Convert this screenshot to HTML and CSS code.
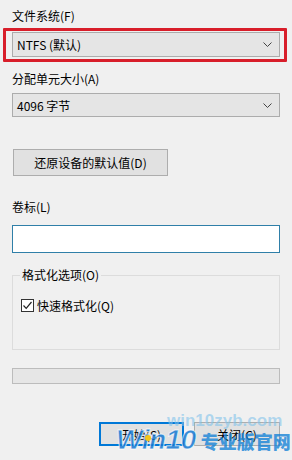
FILE: index.html
```html
<!DOCTYPE html>
<html lang="zh-CN">
<head>
<meta charset="utf-8">
<title>格式化</title>
<link rel="stylesheet" href="styles.css">
</head>
<body>
<div class="dlg">
  <div class="label l1">文件系统(F)</div>
  <div class="combo c1 hl">
    <span>NTFS (默认)</span>
    <svg class="chev" width="9" height="5" viewBox="0 0 9 5"><path d="M0.5 0.5 L4.5 4.5 L8.5 0.5" fill="none" stroke="#444" stroke-width="1"/></svg>
  </div>
  <div class="label l2">分配单元大小(A)</div>
  <div class="combo c2">
    <span>4096 字节</span>
    <svg class="chev" width="9" height="5" viewBox="0 0 9 5"><path d="M0.5 0.5 L4.5 4.5 L8.5 0.5" fill="none" stroke="#444" stroke-width="1"/></svg>
  </div>
  <div class="btn restore">还原设备的默认值(D)</div>
  <div class="label l3">卷标(L)</div>
  <div class="input"></div>
  <div class="group">
    <div class="legend">格式化选项(O)</div>
    <div class="check">
      <span class="box"><svg width="11" height="11" viewBox="0 0 11 11"><path d="M1.5 5.5 L4.2 8.3 L9.5 2" fill="none" stroke="#222" stroke-width="1.2"/></svg></span>
      <span>快速格式化(Q)</span>
    </div>
  </div>
  <div class="progress"></div>
  <div class="actions">
    <div class="btn def">开始(S)</div>
    <div class="btn">关闭(C)</div>
  </div>
</div>
<div class="wm">
  <div class="wm-url">win10zyb.com</div>
  <div class="wm-main"><span class="wm-win">Win10</span><span class="wm-cn">专业版官网</span></div>
  <span class="wm-dot"></span>
</div>
</body>
</html>
```

FILE: styles.css
```css
html, body {
  margin: 0;
  padding: 0;
  background: #f0f0f0;
}
body {
  width: 292px;
  height: 460px;
  overflow: hidden;
  position: relative;
  font-family: "Noto Sans CJK SC", "Microsoft YaHei", sans-serif;
  font-size: 12px;
  color: #000;
}
.dlg {
  padding: 0 12px;
  display: flex;
  flex-direction: column;
}
.label {
  height: 16px;
  line-height: 16px;
}
.l1 { margin-top: 8px; }
.combo {
  box-sizing: border-box;
  height: 25px;
  background: #e5e5e5;
  border: 1px solid #acacac;
  display: flex;
  align-items: center;
  justify-content: space-between;
  padding: 0 7px 0 4px;
  width: 268px;
}
.c1 { margin-top: 8px; position: relative; }
.hl::after {
  content: "";
  position: absolute;
  left: -10px;
  right: -8px;
  top: -5px;
  bottom: -6px;
  border: 3px solid #d81e2a;
  border-radius: 1px;
}
.l2 { margin-top: 14px; }
.c2 { margin-top: 6px; height: 24px; }
.btn {
  box-sizing: border-box;
  height: 25px;
  background: #e1e1e1;
  border: 1px solid #adadad;
  display: flex;
  align-items: center;
  justify-content: center;
}
.restore {
  margin-top: 32px;
  margin-left: 1px;
  width: 155px;
  height: 27px;
}
.l3 { margin-top: 23px; }
.input {
  box-sizing: border-box;
  margin-top: 10px;
  height: 28px;
  width: 268px;
  background: #fff;
  border: 1px solid #2f7fa8;
}
.group {
  margin-top: 22px;
  box-sizing: border-box;
  width: 268px;
  height: 75px;
  border: 1px solid #dcdcdc;
  position: relative;
  padding: 0 8px;
}
.legend {
  position: absolute;
  left: 7px;
  top: -9px;
  padding: 0 2px;
  background: #f0f0f0;
  line-height: 16px;
  color: #000;
}
.check {
  margin-top: 21px;
  display: flex;
  align-items: center;
  gap: 3px;
  height: 16px;
}
.box {
  box-sizing: border-box;
  width: 13px;
  height: 13px;
  border: 1px solid #333;
  background: #fff;
  display: flex;
  align-items: center;
  justify-content: center;
}
.box svg { display: block; }
.progress {
  box-sizing: border-box;
  margin-top: 18px;
  width: 268px;
  height: 16px;
  background: #e6e6e6;
  border: 1px solid #bcbcbc;
}
.actions {
  margin-top: 38px;
  display: flex;
  justify-content: flex-end;
  gap: 10px;
}
.actions .btn {
  width: 86px;
  height: 24px;
}
.actions .def {
  width: 85px;
  border: 2px solid #0078d7;
}
.wm {
  position: absolute;
  left: 0;
  top: 0;
  width: 292px;
  height: 460px;
  pointer-events: none;
}
.wm-url {
  position: absolute;
  left: 167px;
  top: 411px;
  font-family: "Liberation Sans", sans-serif;
  font-weight: bold;
  font-size: 17px;
  color: rgba(130, 195, 235, 0.6);
}
.wm-main {
  position: absolute;
  left: 116px;
  top: 424px;
  display: flex;
  align-items: baseline;
  white-space: nowrap;
}
.wm-win {
  font-family: "Liberation Sans", sans-serif;
  font-weight: bold;
  font-style: italic;
  font-size: 28px;
  letter-spacing: -0.5px;
  color: rgba(20, 120, 210, 0.85);
  -webkit-text-stroke: 1px rgba(255,255,255,0.7);
}
.wm-cn {
  margin-left: 5px;
  font-weight: 900;
  font-size: 18px;
  letter-spacing: 0;
  color: rgba(20, 130, 215, 0.8);
}
.wm-dot {
  position: absolute;
  left: 145px;
  top: 435px;
  width: 6px;
  height: 6px;
  border-radius: 50%;
  background: #f5c518;
}
```
